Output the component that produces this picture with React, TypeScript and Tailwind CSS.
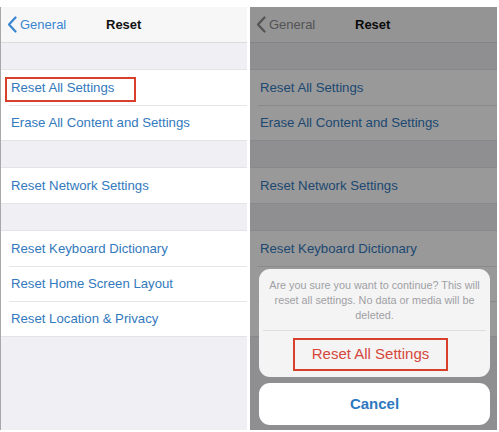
import React from "react";

const SECTIONS = [
  ["Reset All Settings", "Erase All Content and Settings"],
  ["Reset Network Settings"],
  ["Reset Keyboard Dictionary", "Reset Home Screen Layout", "Reset Location & Privacy"],
];

function Chevron({ color }: { color: string }) {
  return (
    <svg width="10" height="17" viewBox="0 0 10 17" fill="none">
      <path d="M8.5 1.5 L2 8.5 L8.5 15.5" stroke={color} strokeWidth="2.2" strokeLinecap="round" strokeLinejoin="round" />
    </svg>
  );
}

function SettingsList({ dimmed, highlight }: { dimmed?: boolean; highlight?: boolean }) {
  return (
    <div className="flex flex-col h-full bg-[#efeff4]">
      <header className="relative h-[36px] shrink-0 flex items-center bg-[#f7f7f8] border-b border-[#dcdce0]">
        <div className="flex items-center gap-[3px] pl-[6px]">
          <Chevron color={dimmed ? "#8a8a8e" : "#3a86d0"} />
          <span className={`text-[13px] ${dimmed ? "text-[#8a8a8e]" : "text-[#3a86d0]"}`}>General</span>
        </div>
        <h1 className="absolute left-[105px] text-[13px] font-bold text-[#111]">Reset</h1>
      </header>
      {SECTIONS.map((rows, i) => (
        <div key={i} className="mt-[26px] bg-white border-y border-[#e3e3e8]">
          {rows.map((label, j) => (
            <div key={label} className="relative h-[35px] flex items-center pl-[10px]">
              {j > 0 && <div className="absolute top-0 left-[8px] right-0 h-px bg-[#e6e6ea]" />}
              <span className="text-[13.2px] text-[#3279bd]">{label}</span>
              {highlight && i === 0 && j === 0 && (
                <div className="absolute left-[4px] top-[7px] w-[131px] h-[25px] border-2 border-[#d9402c]" />
              )}
            </div>
          ))}
        </div>
      ))}
    </div>
  );
}

export default function App() {
  return (
    <div
      className="w-[499px] h-[432px] bg-white flex pt-[7px] gap-[3px]"
      style={{ fontFamily: '"Liberation Sans", Arial, sans-serif' }}
    >
      <section className="w-[247px] h-[423px] border-l border-[#a8a8a8] overflow-hidden">
        <SettingsList highlight />
      </section>
      <section className="relative w-[247px] h-[423px] overflow-hidden">
        <SettingsList dimmed />
        <div className="absolute inset-0 bg-black/40" />
        <div className="absolute left-[9px] right-[7px] bottom-[5px] flex flex-col gap-[6px]">
          <div className="bg-[#f4f4f5] rounded-[11px] flex flex-col">
            <p className="px-[10px] pt-[9px] pb-[7px] text-center text-[10.8px] leading-[15px] text-[#a0a0a3]">
              Are you sure you want to continue? This will reset all settings. No data or media will be deleted.
            </p>
            <div className="h-px bg-[#dedee2] mx-[4px]" />
            <div className="h-[46px] flex items-center justify-center pr-[8px]">
              <div className="w-[155px] h-[33px] border-2 border-[#d9402c] flex items-center justify-center">
                <span className="text-[15px] text-[#d6473c]">Reset All Settings</span>
              </div>
            </div>
          </div>
          <div className="h-[42px] bg-white rounded-[11px] flex items-center justify-center">
            <span className="text-[15px] font-bold text-[#2f79c0]">Cancel</span>
          </div>
        </div>
      </section>
    </div>
  );
}
